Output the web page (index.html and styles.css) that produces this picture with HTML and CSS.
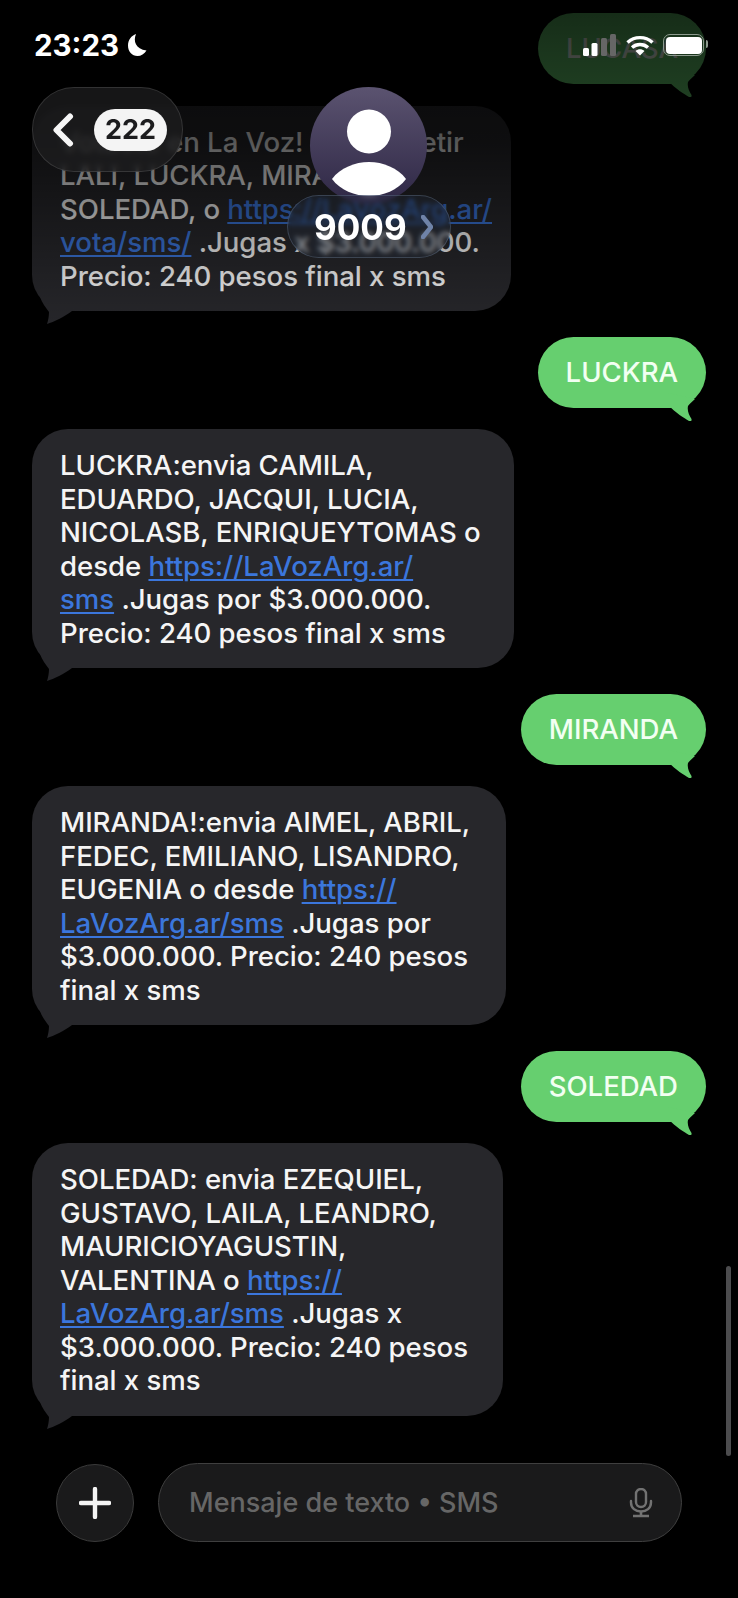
FILE: index.html
```html
<!DOCTYPE html>
<html lang="es">
    <head>
        <title>9009</title>
        <link rel="stylesheet" href="styles.css">
    </head>
    <body>
        <main class="thread">
            <div class="bubble out first">LUCASA
                <svg class="tail" viewBox="0 0 44 30"><path d="M6 14C14 22 22 27 27 30Q30 31 29.5 28C27 24 25 20 26 15C28 12 31 10 33 8L6 2Z"/></svg>
            </div>
            <div class="bubble in w479">
                Votaste en La Voz! Para repetir<br>
                LALI, LUCKRA, MIRANDA,<br>
                SOLEDAD, o <a href="#">https://LaVozArg.ar/</a><br>
                <a href="#">vota/sms/</a> .Jugas x $3.000.000.<br>
                Precio: 240 pesos final x sms
                <svg class="tail" viewBox="0 0 44 30"><path d="M8 3C10 9 14 14 17 18C17 22 16 27 15 30C22 28 32 23 40 17L40 3Z"/></svg>
            </div>
            <div class="bubble out">LUCKRA
                <svg class="tail" viewBox="0 0 44 30"><path d="M6 14C14 22 22 27 27 30Q30 31 29.5 28C27 24 25 20 26 15C28 12 31 10 33 8L6 2Z"/></svg>
            </div>
            <div class="bubble in w482">
                LUCKRA:envia CAMILA,<br>
                EDUARDO, JACQUI, LUCIA,<br>
                NICOLASB, ENRIQUEYTOMAS o<br>
                desde <a href="#">https://LaVozArg.ar/</a><br>
                <a href="#">sms</a> .Jugas por $3.000.000.<br>
                Precio: 240 pesos final x sms
                <svg class="tail" viewBox="0 0 44 30"><path d="M8 3C10 9 14 14 17 18C17 22 16 27 15 30C22 28 32 23 40 17L40 3Z"/></svg>
            </div>
            <div class="bubble out">MIRANDA
                <svg class="tail" viewBox="0 0 44 30"><path d="M6 14C14 22 22 27 27 30Q30 31 29.5 28C27 24 25 20 26 15C28 12 31 10 33 8L6 2Z"/></svg>
            </div>
            <div class="bubble in w474">
                MIRANDA!:envia AIMEL, ABRIL,<br>
                FEDEC, EMILIANO, LISANDRO,<br>
                EUGENIA o desde <a href="#">https://</a><br>
                <a href="#">LaVozArg.ar/sms</a> .Jugas por<br>
                $3.000.000. Precio: 240 pesos<br>
                final x sms
                <svg class="tail" viewBox="0 0 44 30"><path d="M8 3C10 9 14 14 17 18C17 22 16 27 15 30C22 28 32 23 40 17L40 3Z"/></svg>
            </div>
            <div class="bubble out">SOLEDAD
                <svg class="tail" viewBox="0 0 44 30"><path d="M6 14C14 22 22 27 27 30Q30 31 29.5 28C27 24 25 20 26 15C28 12 31 10 33 8L6 2Z"/></svg>
            </div>
            <div class="bubble in w471">
                SOLEDAD: envia EZEQUIEL,<br>
                GUSTAVO, LAILA, LEANDRO,<br>
                MAURICIOYAGUSTIN,<br>
                VALENTINA o <a href="#">https://</a><br>
                <a href="#">LaVozArg.ar/sms</a> .Jugas x<br>
                $3.000.000. Precio: 240 pesos<br>
                final x sms
                <svg class="tail" viewBox="0 0 44 30"><path d="M8 3C10 9 14 14 17 18C17 22 16 27 15 30C22 28 32 23 40 17L40 3Z"/></svg>
            </div>
        </main>

        <footer class="composer">
            <button class="plus">
                <svg viewBox="0 0 32 32" width="32" height="32"><path d="M16 2V30M2 16H30" stroke="#f4f4f4" stroke-width="4.4" stroke-linecap="round"/></svg>
            </button>
            <div class="field">
                <span class="placeholder">Mensaje de texto • SMS</span>
                <svg class="mic" viewBox="0 0 24 30" width="24" height="30">
                    <rect x="7" y="1" width="10" height="18" rx="5" fill="none" stroke="#727272" stroke-width="2.4"/>
                    <path d="M2 13V14.5C2 20 6.5 23.5 12 23.5S22 20 22 14.5V13" fill="none" stroke="#727272" stroke-width="2.4" stroke-linecap="round"/>
                    <path d="M12 23.5V27M4 28H20" stroke="#727272" stroke-width="2.6"/>
                </svg>
            </div>
        </footer>

        <!-- everything below floats over the scrolled messages -->
        <div class="fade"></div>

        <div class="status">
            <div class="clock">23:23
                <svg viewBox="0 0 22 24" width="22" height="24"><path d="M9 1C6 8 8.500 16 19.500 17.500C17.500 21 14 23 10.500 23C5 23 1 18.500 1 12.500C1 7 4.500 2.500 9 1Z" fill="#fff"/></svg>
            </div>
            <div class="icons">
                <svg viewBox="0 0 34 22" width="34" height="22">
                    <rect x="0" y="14" width="6" height="8" rx="1.500" fill="#fff"/>
                    <rect x="8.500" y="9" width="6" height="13" rx="1.500" fill="#fff"/>
                    <rect x="18" y="4" width="6" height="18" rx="1.500" fill="#666"/>
                    <rect x="27" y="0" width="6" height="22" rx="1.500" fill="#666"/>
                </svg>
                <svg viewBox="0 0 28 21" width="28" height="21">
                    <path d="M1.500 7.500C8.500 1 19.500 1 26.500 7.500M6 12.500C10.500 8.500 17.500 8.500 22 12.500" fill="none" stroke="#fff" stroke-width="3.400"/>
                    <path d="M9.500 16L14 20.500L18.500 16C16 13.800 12 13.800 9.500 16Z" fill="#fff"/>
                </svg>
                <div class="battery"><span></span></div>
            </div>
        </div>

        <div class="back">
            <svg viewBox="0 0 22 34" width="22" height="34"><path d="M18 3.500L4.500 17L18 30.500" fill="none" stroke="#f6f6f6" stroke-width="6" stroke-linecap="round" stroke-linejoin="round"/></svg>
            <span class="count">222</span>
        </div>

        <div class="avatar">
            <svg viewBox="0 0 117 117" width="117" height="117">
                <circle cx="59" cy="44.500" r="22" fill="#fff"/>
                <path d="M22 92C30 81 45 75 59 75C73 75 88 81 96 92C88 103 73 109 59 109C45 109 30 103 22 92Z" fill="#fff"/>
            </svg>
        </div>
        <div class="contact">
            <span>9009</span>
            <svg viewBox="0 0 12 24" width="12" height="24"><path d="M2 2L10 12L2 22" fill="none" stroke="#6f83a8" stroke-width="4.500" stroke-linecap="round" stroke-linejoin="round"/></svg>
        </div>

        <div class="scrollbar"></div>
    </body>
</html>
```

FILE: styles.css
```css
html, body {
    margin: 0;
    height: 100%;
}

body {
    position: relative;
    width: 738px;
    height: 1598px;
    overflow: hidden;
    background: #000;
    color: #f5f5f5;
    font-family: Inter, "Noto Sans", sans-serif;
}

.thread {
    display: flex;
    flex-direction: column;
    align-items: flex-start;
    padding: 13px 32px 0;
}

.bubble {
    position: relative;
    box-sizing: border-box;
    padding: 20px 0 18px 28px;
    border-radius: 36px;
    font-size: 27.600px;
    font-weight: 500;
    letter-spacing: -.05px;
    line-height: 33.500px;
    white-space: nowrap;
}

.bubble .tail {
    position: absolute;
    bottom: -13px;
    width: 44px;
    height: 30px;
}

.in {
    margin-top: 21.500px;
    background: #27272b;
}

/* bubble widths differ by the way the text wrapped on the phone */
.w479 { width: 479px; }
.w482 { width: 482px; }
.w474 { width: 474px; }
.w471 { width: 471px; }

.in .tail {
    left: 0;
    fill: #27272b;
}

.out {
    align-self: flex-end;
    margin-top: 25.500px;
    height: 71px;
    padding: 19px 28px;
    background: #66cf6f;
    color: #f2fff2;
}

.out.first {
    margin-top: 0;
}

.out .tail {
    right: 0;
    fill: #66cf6f;
}

.in a {
    color: #3b76dc;
    text-decoration: underline;
    text-decoration-thickness: 2px;
    text-underline-offset: 3px;
}

.composer {
    position: absolute;
    left: 56px;
    top: 1463px;
    display: flex;
    align-items: center;
    gap: 24px;
}

.plus {
    display: flex;
    align-items: center;
    justify-content: center;
    width: 78px;
    height: 78px;
    padding: 0;
    border: 1px solid #3a3a3a;
    border-radius: 50%;
    background: #1a1a1b;
}

.field {
    display: flex;
    align-items: center;
    justify-content: space-between;
    box-sizing: border-box;
    width: 524px;
    height: 79px;
    padding: 0 28px 0 30px;
    border: 1px solid #3f3f3f;
    border-radius: 40px;
    background: #1a1a1b;
}

.placeholder {
    color: #666;
    font-size: 27px;
    font-weight: 500;
}

.fade {
    position: absolute;
    top: 0;
    left: 0;
    width: 100%;
    height: 330px;
    background: linear-gradient(rgba(0,0,0,.8), rgba(0,0,0,.74) 16%, rgba(0,0,0,.66) 42%, rgba(0,0,0,.25) 78%, rgba(0,0,0,0));
}

.status {
    position: absolute;
    top: 27px;
    left: 34px;
    width: 670px;
    display: flex;
    align-items: center;
    justify-content: space-between;
}

.clock {
    display: flex;
    align-items: center;
    gap: 8px;
    font-size: 29.500px;
    font-weight: 700;
    color: #fff;
}

.icons {
    display: flex;
    align-items: center;
    gap: 9px;
}

.battery {
    position: relative;
    box-sizing: border-box;
    width: 41px;
    height: 22px;
    padding: 1.500px;
    border: 1.500px solid #8d9a8e;
    border-radius: 7px;
}

.battery span {
    display: block;
    height: 100%;
    border-radius: 4px;
    background: #fff;
}

.battery::after {
    content: "";
    position: absolute;
    top: 5px;
    right: -5px;
    width: 2px;
    height: 8px;
    border-radius: 0 2px 2px 0;
    background: #8d9a8e;
}

.back {
    position: absolute;
    top: 87px;
    left: 32px;
    box-sizing: border-box;
    display: flex;
    align-items: center;
    gap: 20px;
    width: 151px;
    height: 85px;
    padding-left: 19px;
    border: 1px solid rgba(255,255,255,.12);
    border-radius: 42px;
    background: rgba(30,30,32,.72);
    backdrop-filter: blur(3px);
}

.count {
    display: flex;
    align-items: center;
    justify-content: center;
    width: 73px;
    height: 42px;
    border-radius: 21px;
    background: #f4f4f4;
    color: #1c1c1e;
    font-size: 27px;
    font-weight: 700;
}

.avatar {
    position: absolute;
    top: 87px;
    left: 310px;
    width: 117px;
    height: 117px;
    border-radius: 50%;
    background: linear-gradient(#5b5370, #2e2745);
}

.avatar svg {
    display: block;
}

.contact {
    position: absolute;
    top: 195px;
    left: 287px;
    box-sizing: border-box;
    display: flex;
    align-items: center;
    gap: 14px;
    width: 164px;
    height: 63px;
    padding-left: 26px;
    border: 1px solid rgba(130,150,180,.3);
    border-radius: 32px;
    background: rgba(40,50,70,.25);
    backdrop-filter: blur(2.500px);
    color: #fff;
    font-size: 35px;
    font-weight: 700;
}

.scrollbar {
    position: absolute;
    top: 1266px;
    left: 726px;
    width: 5px;
    height: 190px;
    border-radius: 3px;
    background: #4c4c4e;
}
```
